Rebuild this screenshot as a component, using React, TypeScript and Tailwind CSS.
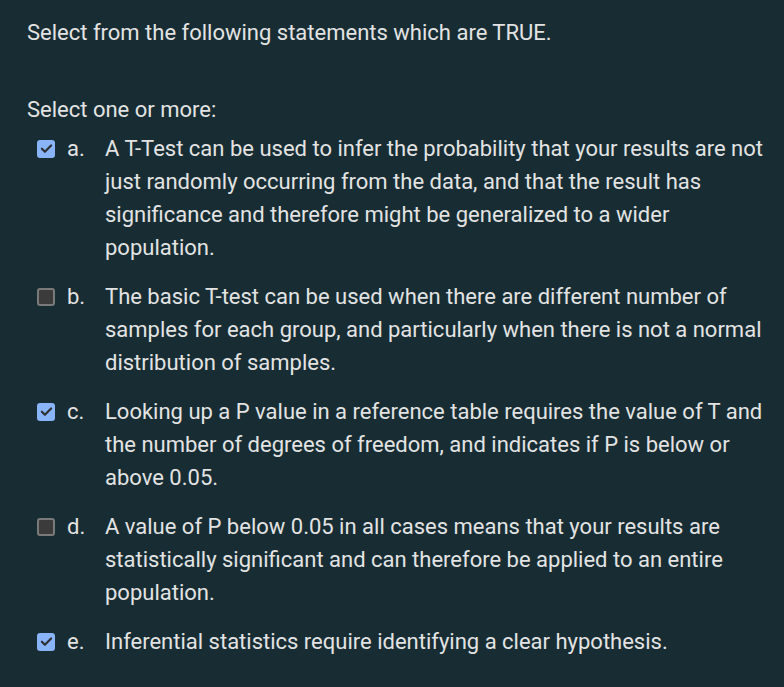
const options = [
  {
    letter: "a.",
    checked: true,
    text: "A T-Test can be used to infer the probability that your results are not just randomly occurring from the data, and that the result has significance and therefore might be generalized to a wider population.",
  },
  {
    letter: "b.",
    checked: false,
    text: "The basic T-test can be used when there are different number of samples for each group, and particularly when there is not a normal distribution of samples.",
  },
  {
    letter: "c.",
    checked: true,
    text: "Looking up a P value in a reference table requires the value of T and the number of degrees of freedom, and indicates if P is below or above 0.05.",
  },
  {
    letter: "d.",
    checked: false,
    text: "A value of P below 0.05 in all cases means that your results are statistically significant and can therefore be applied to an entire population.",
  },
  {
    letter: "e.",
    checked: true,
    text: "Inferential statistics require identifying a clear hypothesis.",
  },
];

function Checkbox({ checked }: { checked: boolean }) {
  if (checked) {
    return (
      <span className="flex h-[18px] w-[18px] items-center justify-center rounded-[3px] bg-[#8ab4f8]">
        <svg width="13" height="13" viewBox="0 0 24 24">
          <path d="M3.5 12.5l5.5 5.5L20.5 6.5" fill="none" stroke="#2d2f33" strokeWidth="4" strokeLinecap="round" strokeLinejoin="round" />
        </svg>
      </span>
    );
  }
  return <span className="block h-[18px] w-[18px] rounded-[3px] border-2 border-[#7a7a7a] bg-[#3b3b3b]" />;
}

export default function App() {
  return (
    <div className="min-h-screen bg-[#172d33] pl-[27px] pt-[16px] text-[22px] leading-[33px] text-[#e3e3e3]" style={{ fontFamily: "Roboto, sans-serif" }}>
      <p>Select from the following statements which are TRUE.</p>
      <p className="mt-[44px]">Select one or more:</p>
      <div className="mt-[6px] flex flex-col gap-[16px]">
        {options.map((o) => (
          <div key={o.letter} className="flex">
            <div className="flex h-[33px] w-[40px] shrink-0 items-center pl-[10px]">
              <Checkbox checked={o.checked} />
            </div>
            <span className="w-[38px] shrink-0">{o.letter}</span>
            <p className="max-w-[666px]">{o.text}</p>
          </div>
        ))}
      </div>
    </div>
  );
}
